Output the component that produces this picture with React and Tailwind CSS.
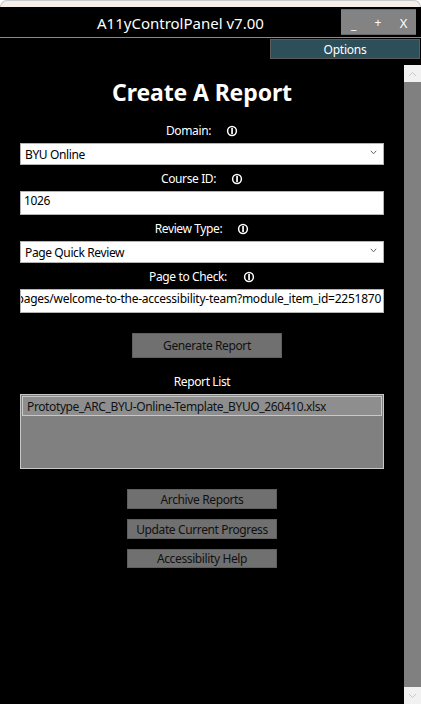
function Info() {
  return (
    <svg width="12" height="12" viewBox="0 0 12 12" className="shrink-0">
      <circle cx="6" cy="6" r="4.4" fill="none" stroke="#fff" strokeWidth="1.5" />
      <rect x="5.2" y="3" width="1.7" height="6" fill="#fff" />
    </svg>
  );
}
function Chevron() {
  return (
    <svg width="7" height="5" viewBox="0 0 7 5" className="mb-[3px] shrink-0">
      <path d="M0.8 0.8 L3.5 3.8 L6.2 0.8" fill="none" stroke="#666" strokeWidth="1" />
    </svg>
  );
}
function Label({ text, gap }) {
  return (
    <div className="flex h-[26px] items-center justify-center pt-[1px] text-white">
      <span>{text}</span>
      <span className={gap}><Info /></span>
    </div>
  );
}
function Select({ value }) {
  return (
    <div className="flex h-[22px] items-center justify-between border border-[#b4b4b4] bg-white pl-[4px] pr-[6px] text-black">
      <span className="pt-[1px]">{value}</span>
      <Chevron />
    </div>
  );
}
function Input({ value, right }) {
  return (
    <div className={`flex h-[24px] items-start overflow-hidden border border-[#b4b4b4] bg-white pt-[1px] text-black whitespace-nowrap ${right ? "justify-end pr-[2px] tracking-[-0.25px]" : "pl-[3px]"}`}>
      <span>{value}</span>
    </div>
  );
}
function Btn({ text, h = "h-[20px]", pad = "pt-[1px]" }) {
  return (
    <div className={`flex ${h} ${pad} w-[150px] items-center justify-center border border-[#5f5f5f] bg-[#707070] text-[#111]`}>{text}</div>
  );
}
export default function App() {
  return (
    <div className="h-[704px] w-[421px] overflow-hidden bg-white font-['Noto_Sans',sans-serif] text-[12px] leading-[16px] tracking-[-0.38px]">
      <div className="h-[7px] rounded-t-[8px] border-x border-t border-[#c9c9c9] bg-[#f6eee8]" />
      <div className="h-[697px] bg-black">
        <div className="flex h-[31px] items-start justify-between border-b border-[#8a8a8a] pt-[2px] pl-[97px] pr-[5px]">
          <div className="pt-[4px] text-[15px] leading-[20px] tracking-[0px] text-white">A11yControlPanel v7.00</div>
          <div className="flex h-[26px] w-[75px] items-center justify-between border-y border-[#6a6a6a] bg-[#838383] pl-[10px] pr-[9px] pt-[1px] text-white">
            <span className="pt-[4px]">_</span>
            <span>+</span>
            <span className="text-[13px]">X</span>
          </div>
        </div>
        <div className="flex justify-end pt-[1px] pr-[1px]">
          <div className="flex h-[20px] w-[150px] items-center justify-center border border-[#5c5c5c] bg-[#2c4f5a] pt-[1px] tracking-[-0.25px] text-white">Options</div>
        </div>
        <div className="flex pt-[6px]">
          <main className="w-[404px] px-[20px]">
            <h1 className="pt-[10px] text-center text-[23px] font-bold leading-[34px] tracking-[-0.12px] text-white">Create A Report</h1>
            <div className="pt-[8px]">
              <Label text="Domain:" gap="pl-[15px]" />
              <Select value="BYU Online" />
              <Label text="Course ID:" gap="pl-[15px]" />
              <Input value="1026" />
              <Label text="Review Type:" gap="pl-[15px]" />
              <Select value="Page Quick Review" />
              <Label text="Page to Check:" gap="pl-[16px]" />
              <Input right value="pages/welcome-to-the-accessibility-team?module_item_id=2251870" />
            </div>
            <div className="flex justify-center pt-[20px] pl-[10px]"><Btn text="Generate Report" h="h-[25px]" pad="pt-0" /></div>
            <div className="pt-[16px] pb-[4px] text-center text-white">Report List</div>
            <div className="h-[75px] border border-[#c8c8c8] bg-[#808080] p-[1px]">
              <div className="flex h-[20px] items-center border border-[#c8c8c8] bg-[#8e8e8e] pl-[4px] pt-[1px] text-[#111]">Prototype_ARC_BYU-Online-Template_BYUO_260410.xlsx</div>
            </div>
            <div className="flex flex-col items-center gap-[10px] pt-[20px]">
              <Btn text="Archive Reports" />
              <Btn text="Update Current Progress" />
              <Btn text="Accessibility Help" h="h-[19px]" pad="pt-0" />
            </div>
          </main>
          <div className="flex h-[639px] w-[17px] flex-col justify-between bg-[#808080]">
            <div className="flex h-[17px] items-center justify-center bg-[#f1f1f1]">
              <svg width="9" height="6" viewBox="0 0 9 6"><path d="M1 5 L4.5 1.5 L8 5" fill="none" stroke="#c8c8c8" /></svg>
            </div>
            <div className="flex h-[17px] items-center justify-center bg-[#f1f1f1]">
              <svg width="9" height="6" viewBox="0 0 9 6"><path d="M1 1 L4.5 4.5 L8 1" fill="none" stroke="#c8c8c8" /></svg>
            </div>
          </div>
        </div>
      </div>
    </div>
  );
}
